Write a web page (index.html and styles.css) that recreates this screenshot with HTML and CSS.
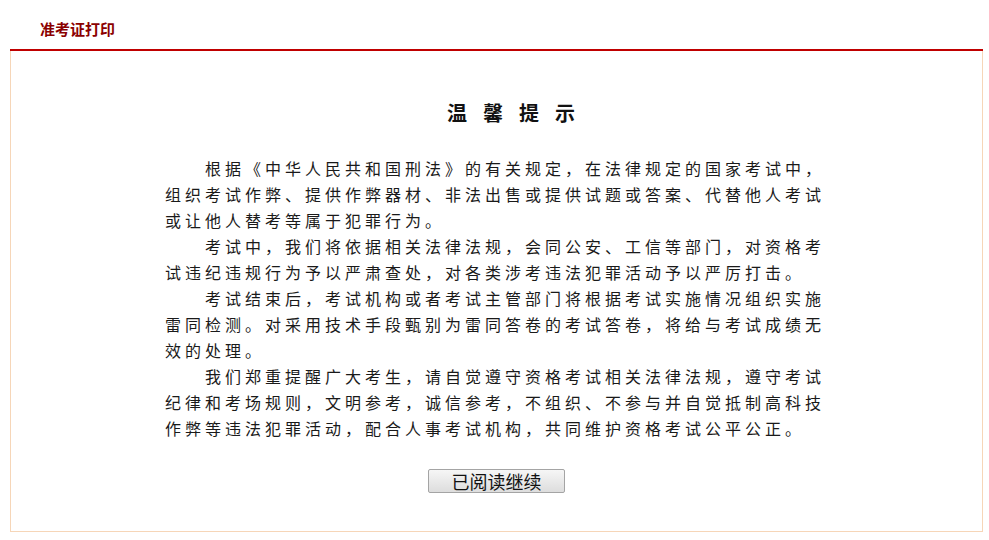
FILE: index.html
```html
<!DOCTYPE html>
<html lang="zh-CN">
<head>
<meta charset="utf-8">
<title>准考证打印</title>
<link rel="stylesheet" href="styles.css">
</head>
<body>
<div class="header"><span class="header-title">准考证打印</span></div>
<div class="panel">
  <h2 class="notice-title">温馨提示</h2>
  <div class="notice-body">
    <p>根据《中华人民共和国刑法》的有关规定，在法律规定的国家考试中，<br>组织考试作弊、提供作弊器材、非法出售或提供试题或答案、代替他人考试或让他人替考等属于犯罪行为。</p>
    <p>考试中，我们将依据相关法律法规，会同公安、工信等部门，对资格考试违纪违规行为予以严肃查处，对各类涉考违法犯罪活动予以严厉打击。</p>
    <p>考试结束后，考试机构或者考试主管部门将根据考试实施情况组织实施雷同检测。对采用技术手段甄别为雷同答卷的考试答卷，将给与考试成绩无效的处理。</p>
    <p>我们郑重提醒广大考生，请自觉遵守资格考试相关法律法规，遵守考试纪律和考场规则，文明参考，诚信参考，不组织、不参与并自觉抵制高科技作弊等违法犯罪活动，配合人事考试机构，共同维护资格考试公平公正。</p>
  </div>
  <div class="actions"><button class="continue-btn" type="button">已阅读继续</button></div>
</div>
</body>
</html>
```
FILE: styles.css
```css
html, body {
  margin: 0;
  padding: 0;
  background: #ffffff;
}
body {
  font-family: "Noto Sans CJK SC", "Noto Sans", sans-serif;
  color: #222;
}
.header {
  margin: 0 6px 0 10px;
  padding: 8px 0 0 30px;
  height: 41px;
  line-height: 40px;
  box-sizing: border-box;
  height: 51px;
  border-bottom: 2px solid #c00000;
}
.header-title {
  font-size: 15px;
  font-weight: bold;
  color: #8b0000;
}
.panel {
  margin: 0 6px 0 10px;
  border: 1px solid #f6d6b8;
  border-top: 0;
  box-sizing: border-box;
  height: 481px;
  padding-top: 47px;
}
.notice-title {
  margin: 0;
  font-size: 20px;
  line-height: 30px;
  font-weight: bold;
  text-align: center;
  letter-spacing: 16px;
  padding-left: 45px;
  color: #111;
}
.notice-body {
  width: 663px;
  margin: 27px auto 0;
  font-size: 16px;
  line-height: 26px;
  letter-spacing: 4px;
  color: #1a1a1a;
}
.notice-body p {
  margin: 0;
  text-indent: 40px;
}
.actions {
  display: flex;
  justify-content: center;
  margin-top: 28px;
}
.continue-btn {
  width: 137px;
  height: 24px;
  padding: 0;
  border: 1px solid #a4a4a4;
  border-radius: 2px;
  background: linear-gradient(#f6f6f6, #dddddd);
  font-family: "Noto Sans CJK SC", "Noto Sans", sans-serif;
  font-size: 18px;
  line-height: 22px;
  color: #111;
}
```
